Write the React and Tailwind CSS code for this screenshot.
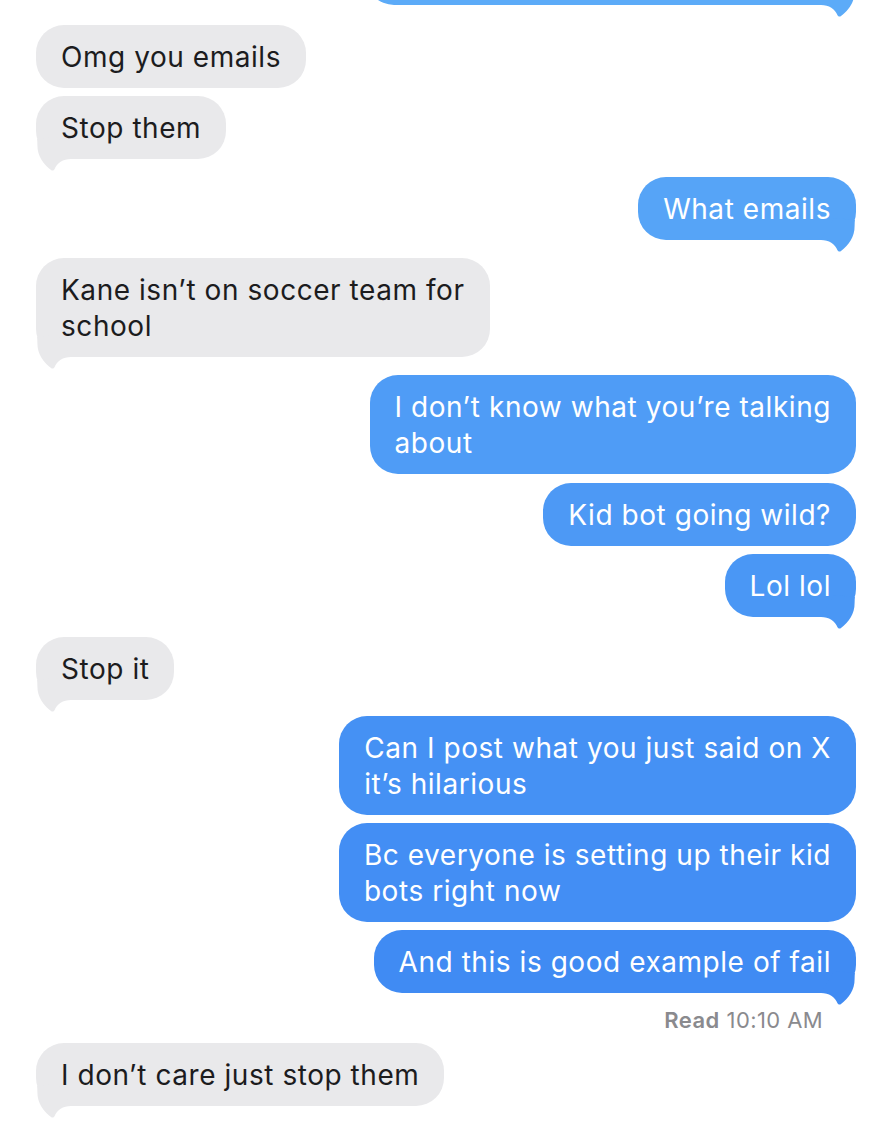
import React from "react";

function Tail({ side, color }) {
  const isRight = side === "right";
  return (
    <svg
      className={
        "absolute bottom-[-12px] w-[40px] h-[40px] " +
        (isRight ? "right-0" : "left-0 scale-x-[-1]")
      }
      viewBox="-40 -28 40 40"
      aria-hidden="true"
    >
      <path
        d="M -35 0 C -27 0 -21 4 -18.5 10.2 C -17.8 11.8 -16 12 -15 11 C -7.5 5.5 -1.2 -3 -1.4 -14 L -1.2 -20 L -22 -22 Z"
        fill={color}
      />
    </svg>
  );
}

function Bubble({ side, color, tail, children, className = "" }) {
  const isRight = side === "right";
  return (
    <div className={"flex " + (isRight ? "justify-end" : "justify-start") + " " + className}>
      <div
        className={
          "relative rounded-[28px] px-[25px] py-[13.5px] text-[28px] leading-[36px] tracking-[0.55px] whitespace-nowrap " +
          (isRight ? "text-white" : "text-[#1c1c1e]")
        }
        style={{ backgroundColor: color }}
      >
        {tail && <Tail side={side} color={color} />}
        <span className="relative">{children}</span>
      </div>
    </div>
  );
}

const GRAY = "#E9E9EB";

export default function App() {
  return (
    <div
      className="w-[882px] h-[1136px] overflow-hidden bg-white pl-[36px] pr-[26px]"
      style={{ fontFamily: "Inter, 'Noto Sans', sans-serif" }}
    >
      <div className="-mt-[58px]">
        <Bubble side="right" color="#5CABF8" tail>
          <span className="inline-block w-[440px]">&nbsp;</span>
        </Bubble>
      </div>
      <Bubble side="left" color={GRAY} className="mt-[20px]">
        Omg you emails
      </Bubble>
      <Bubble side="left" color={GRAY} tail className="mt-[8px]">
        Stop them
      </Bubble>
      <Bubble side="right" color="#56A4F7" tail className="mt-[18px]">
        What emails
      </Bubble>
      <Bubble side="left" color={GRAY} tail className="mt-[18px]">
        Kane isn’t on soccer team for
        <br />
        school
      </Bubble>
      <Bubble side="right" color="#4F9CF6" className="mt-[18px]">
        I don’t know what you’re talking
        <br />
        about
      </Bubble>
      <Bubble side="right" color="#4D99F5" className="mt-[9px]">
        Kid bot going wild?
      </Bubble>
      <Bubble side="right" color="#4A97F5" tail className="mt-[8px]">
        Lol lol
      </Bubble>
      <Bubble side="left" color={GRAY} tail className="mt-[20px]">
        Stop it
      </Bubble>
      <Bubble side="right" color="#4591F4" className="mt-[16px]">
        Can I post what you just said on X
        <br />
        it’s hilarious
      </Bubble>
      <Bubble side="right" color="#438EF4" className="mt-[8px]">
        Bc everyone is setting up their kid
        <br />
        bots right now
      </Bubble>
      <Bubble side="right" color="#408BF3" tail className="mt-[8px]">
        And this is good example of fail
      </Bubble>
      <div className="flex justify-end pr-[33px] mt-[13px] text-[22px] leading-[28px] tracking-[0.4px] text-[#8a8a8e]">
        <span className="font-semibold">Read</span>
        <span className="ml-[7px]">10:10 AM</span>
      </div>
      <Bubble side="left" color={GRAY} tail className="mt-[9px]">
        I don’t care just stop them
      </Bubble>
    </div>
  );
}
